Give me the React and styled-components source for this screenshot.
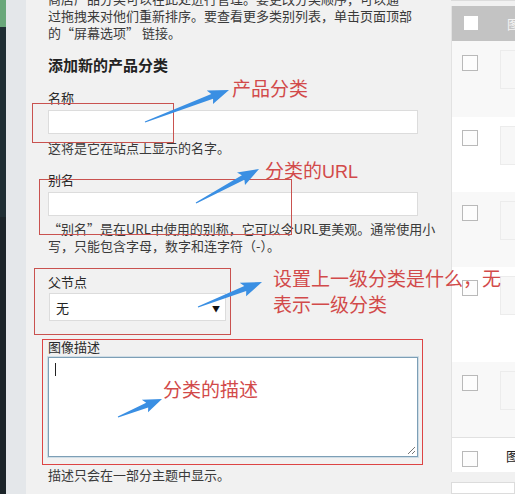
import React from "react";
import styled, { createGlobalStyle } from "styled-components";

const Global = createGlobalStyle`
  html, body { margin: 0; padding: 0; }
  body {
    background: #f1f1f1;
    font-family: "Noto Sans CJK SC", "Noto Sans", sans-serif;
    color: #3a3a3a;
    overflow: hidden;
  }
`;

const Page = styled.div`
  position: relative;
  display: flex;
  width: 515px;
  height: 494px;
  overflow: hidden;
  background: #f1f1f1;
`;

const Sidebar = styled.div`
  width: 6px;
  display: flex;
  flex-direction: column;
  flex-shrink: 0;
`;

const SideBlock = styled.div`
  height: ${(p) => (p.$h ? `${p.$h}px` : "auto")};
  flex: ${(p) => (p.$h ? "none" : "1")};
  background: ${(p) => p.$bg};
`;

const Gutter = styled.div`
  width: 20px;
  flex-shrink: 0;
  background: #e4e7ea;
`;

const Main = styled.div`
  display: flex;
  flex: 1;
  padding-left: 22px;
  min-width: 0;
`;

const FormCol = styled.div`
  width: 370px;
  flex-shrink: 0;
  display: flex;
  flex-direction: column;
`;

const Para = styled.p`
  margin: ${(p) => p.$mt || 0}px 0 0 0;
  font-size: 13px;
  line-height: 17px;
  color: #3a3a3a;
  white-space: ${(p) => (p.$nowrap ? "nowrap" : "normal")};
`;

const Heading = styled.h3`
  margin: 14px 0 0 0;
  font-size: 15px;
  line-height: 20px;
  font-weight: 700;
  color: #222;
`;

const Label = styled.label`
  display: block;
  margin-top: ${(p) => p.$mt}px;
  font-size: 13px;
  line-height: 17px;
  color: #2a2a2a;
`;

const TextInput = styled.div`
  margin-top: 4.5px;
  height: 24px;
  box-sizing: border-box;
  background: #fff;
  border: 1px solid #dcdcdc;
  width: 370px;
`;

const Select = styled.div`
  margin-top: 3.5px;
  margin-left: 1px;
  width: 177px;
  height: 28px;
  box-sizing: border-box;
  background: #fff;
  border: 1px solid #dcdcdc;
  display: flex;
  align-items: center;
  justify-content: space-between;
  padding: 0 5px 0 6px;
  font-size: 13px;
  color: #222;
`;

const Caret = styled.span`
  font-size: 8px;
  color: #111;
  margin-top: 2px;
`;

const TextArea = styled.div`
  position: relative;
  margin-top: 2.5px;
  width: 370px;
  height: 100px;
  box-sizing: border-box;
  background: #fff;
  border: 1px solid #7d9fb6;
  box-shadow: 0 0 0 1px #cfdde6;
`;

const Cursor = styled.span`
  position: absolute;
  left: 6px;
  top: 5px;
  width: 1px;
  height: 13px;
  background: #222;
`;

const Grip = styled.svg`
  position: absolute;
  right: 1px;
  bottom: 1px;
`;

const RightPanel = styled.div`
  margin-left: 33px;
  flex: 1;
  min-width: 0;
  display: flex;
  flex-direction: column;
`;

const SearchBox = styled.div`
  margin-top: -10px;
  height: 19px;
  box-sizing: border-box;
  background: #fff;
  border: 1px solid #dcdcdc;
  font-size: 13px;
  line-height: 17px;
  padding-left: 5px;
  color: #333;
  white-space: nowrap;
  overflow: hidden;
`;

const Table = styled.div`
  margin-top: 5px;
  border-left: 1px solid #e2e2e2;
  display: flex;
  flex-direction: column;
`;

const HeadRow = styled.div`
  height: 35px;
  background: #c3c3c3;
  display: flex;
  align-items: center;
  padding-left: 11px;
`;

const Row = styled.div`
  height: ${(p) => p.$h}px;
  background: ${(p) => (p.$alt ? "#f8f8f8" : "#fff")};
  border-top: ${(p) => (p.$line ? "1px solid #e1e1e1" : "none")};
  box-sizing: border-box;
  display: flex;
  align-items: flex-start;
  padding-left: 10px;
`;

const Check = styled.span`
  display: block;
  width: ${(p) => (p.$head ? 14 : 16)}px;
  height: ${(p) => (p.$head ? 14 : 16)}px;
  box-sizing: border-box;
  flex-shrink: 0;
  background: ${(p) => (p.$head ? "#fff" : "#fdfdfd")};
  border: ${(p) => (p.$head ? "none" : "1px solid #b9b9b9")};
  margin-top: ${(p) => p.$mt || 0}px;
  margin-left: ${(p) => (p.$head ? 1 : 0)}px;
`;

const HeadText = styled.span`
  margin-left: 29px;
  font-size: 13px;
  color: #f4f4f4;
  white-space: nowrap;
`;

const Thumb = styled.span`
  display: block;
  margin-left: 22px;
  margin-top: 9px;
  width: 40px;
  height: 39px;
  box-sizing: border-box;
  background: #f7f7f7;
  border: 1px solid #ececec;
  flex-shrink: 0;
`;

const RowText = styled.span`
  margin-left: 28px;
  margin-top: 9px;
  font-size: 13px;
  line-height: 17px;
  color: #222;
  white-space: nowrap;
`;

const BottomBox = styled.div`
  margin-top: 10px;
  height: 20px;
  background: #fff;
  border: 1px solid #dcdcdc;
`;

/* ---------- annotations (overlay) ---------- */

const Overlay = styled.svg`
  position: absolute;
  left: 0;
  top: 0;
  pointer-events: none;
`;

const Box = styled.div`
  position: absolute;
  left: ${(p) => p.$x}px;
  top: ${(p) => p.$y}px;
  width: ${(p) => p.$w}px;
  height: ${(p) => p.$h}px;
  box-sizing: border-box;
  border: 1px solid ${(p) => p.$c || "#c9524f"};
  pointer-events: none;
`;

const Note = styled.div`
  position: absolute;
  left: ${(p) => p.$x}px;
  top: ${(p) => p.$y}px;
  font-family: "Noto Sans CJK SC", sans-serif;
  font-size: 19px;
  line-height: 26px;
  color: #d24a4a;
  white-space: nowrap;
  pointer-events: none;
`;

const Latin = styled.span`
  font-family: "Liberation Sans", "Noto Sans", sans-serif;
  font-size: 18px;
`;

function arrowPoints(x1, y1, x2, y2, headLen = 18, headW = 7.5) {
  const dx = x2 - x1;
  const dy = y2 - y1;
  const len = Math.hypot(dx, dy);
  const ux = dx / len;
  const uy = dy / len;
  const nx = -uy;
  const ny = ux;
  const bx = x2 - ux * headLen;
  const by = y2 - uy * headLen;
  const pts = [
    [x1 + nx * 0.6, y1 + ny * 0.6],
    [bx + nx * 2.6, by + ny * 2.6],
    [bx + nx * headW - ux * 2, by + ny * headW - uy * 2],
    [x2, y2],
    [bx - nx * headW - ux * 3, by - ny * headW - uy * 3],
    [bx - nx * 2.6, by - ny * 2.6],
    [x1 - nx * 0.6, y1 - ny * 0.6],
  ];
  return pts.map((p) => p.map((v) => v.toFixed(1)).join(",")).join(" ");
}

const arrows = [
  { a: [145, 122, 229, 90] },
  { a: [196, 203, 259, 169] },
  { a: [198, 307, 262, 282] },
  { a: [118, 417, 162, 399], h: 16, w: 7 },
];

const rows = [
  { h: 76, alt: true, thumb: true, mt: 14 },
  { h: 75, alt: false, thumb: true, mt: 13 },
  { h: 75, alt: true, thumb: true, mt: 13 },
  { h: 95, alt: false, thumb: true, mt: 13 },
  { h: 75, alt: true, thumb: true, mt: 13 },
  { h: 35, alt: false, thumb: false, mt: 13, line: true, text: "图" },
];

export default function App() {
  return (
    <>
      <Global />
      <Page>
        <Sidebar>
          <SideBlock $h={27} $bg="#69a77a" />
          <SideBlock $h={190} $bg="#1f2e34" />
          <SideBlock $bg="#1b2429" />
        </Sidebar>
        <Gutter />
        <Main>
          <FormCol>
            <Para $mt={-10} $nowrap>
              商店产品分类可以在此处进行管理。要更改分类顺序，可以通
            </Para>
            <Para $nowrap>过拖拽来对他们重新排序。要查看更多类别列表，单击页面顶部</Para>
            <Para $nowrap>的“屏幕选项” 链接。</Para>

            <Heading>添加新的产品分类</Heading>

            <Label $mt={13.5}>名称</Label>
            <TextInput />
            <Para $mt={4.5}>这将是它在站点上显示的名字。</Para>

            <Label $mt={15}>别名</Label>
            <TextInput />
            <Para $mt={3.5} $nowrap>
              “别名”是在URL中使用的别称，它可以令URL更美观。通常使用小
            </Para>
            <Para $nowrap>写，只能包含字母，数字和连字符（-）。</Para>

            <Label $mt={19}>父节点</Label>
            <Select>
              <span>无</span>
              <Caret>▼</Caret>
            </Select>

            <Label $mt={16.5}>图像描述</Label>
            <TextArea>
              <Cursor />
              <Grip width="10" height="10" viewBox="0 0 10 10">
                <line x1="2" y1="9" x2="9" y2="2" stroke="#777" strokeWidth="1" />
                <line x1="6" y1="9" x2="9" y2="6" stroke="#777" strokeWidth="1" />
              </Grip>
            </TextArea>
            <Para $mt={8.5}>描述只会在一部分主题中显示。</Para>
          </FormCol>

          <RightPanel>
            <SearchBox>规上新闻</SearchBox>
            <Table>
              <HeadRow>
                <Check $head />
                <HeadText>图像</HeadText>
              </HeadRow>
              {rows.map((r, i) => (
                <Row key={i} $h={r.h} $alt={r.alt} $line={r.line}>
                  <Check $mt={r.mt} />
                  {r.thumb ? <Thumb /> : <RowText>{r.text}</RowText>}
                </Row>
              ))}
            </Table>
            <BottomBox />
          </RightPanel>
        </Main>

        <Box $x={32} $y={103} $w={142} $h={40} />
        <Box $x={39} $y={179} $w={253} $h={56} />
        <Box $x={34} $y={268} $w={197} $h={67} />
        <Box $x={42} $y={339} $w={381} $h={126} $c="#dd4444" />

        <Note $x={232} $y={75}>产品分类</Note>
        <Note $x={265} $y={157}>
          分类的<Latin>URL</Latin>
        </Note>
        <Note $x={273} $y={265}>
          设置上一级分类是什么，无
          <br />
          表示一级分类
        </Note>
        <Note $x={163} $y={376}>分类的描述</Note>

        <Overlay width="515" height="494" viewBox="0 0 515 494">
          {arrows.map((ar, i) => (
            <polygon
              key={i}
              points={arrowPoints(...ar.a, ar.h, ar.w)}
              fill="#3a8fe3"
            />
          ))}
        </Overlay>
      </Page>
    </>
  );
}
